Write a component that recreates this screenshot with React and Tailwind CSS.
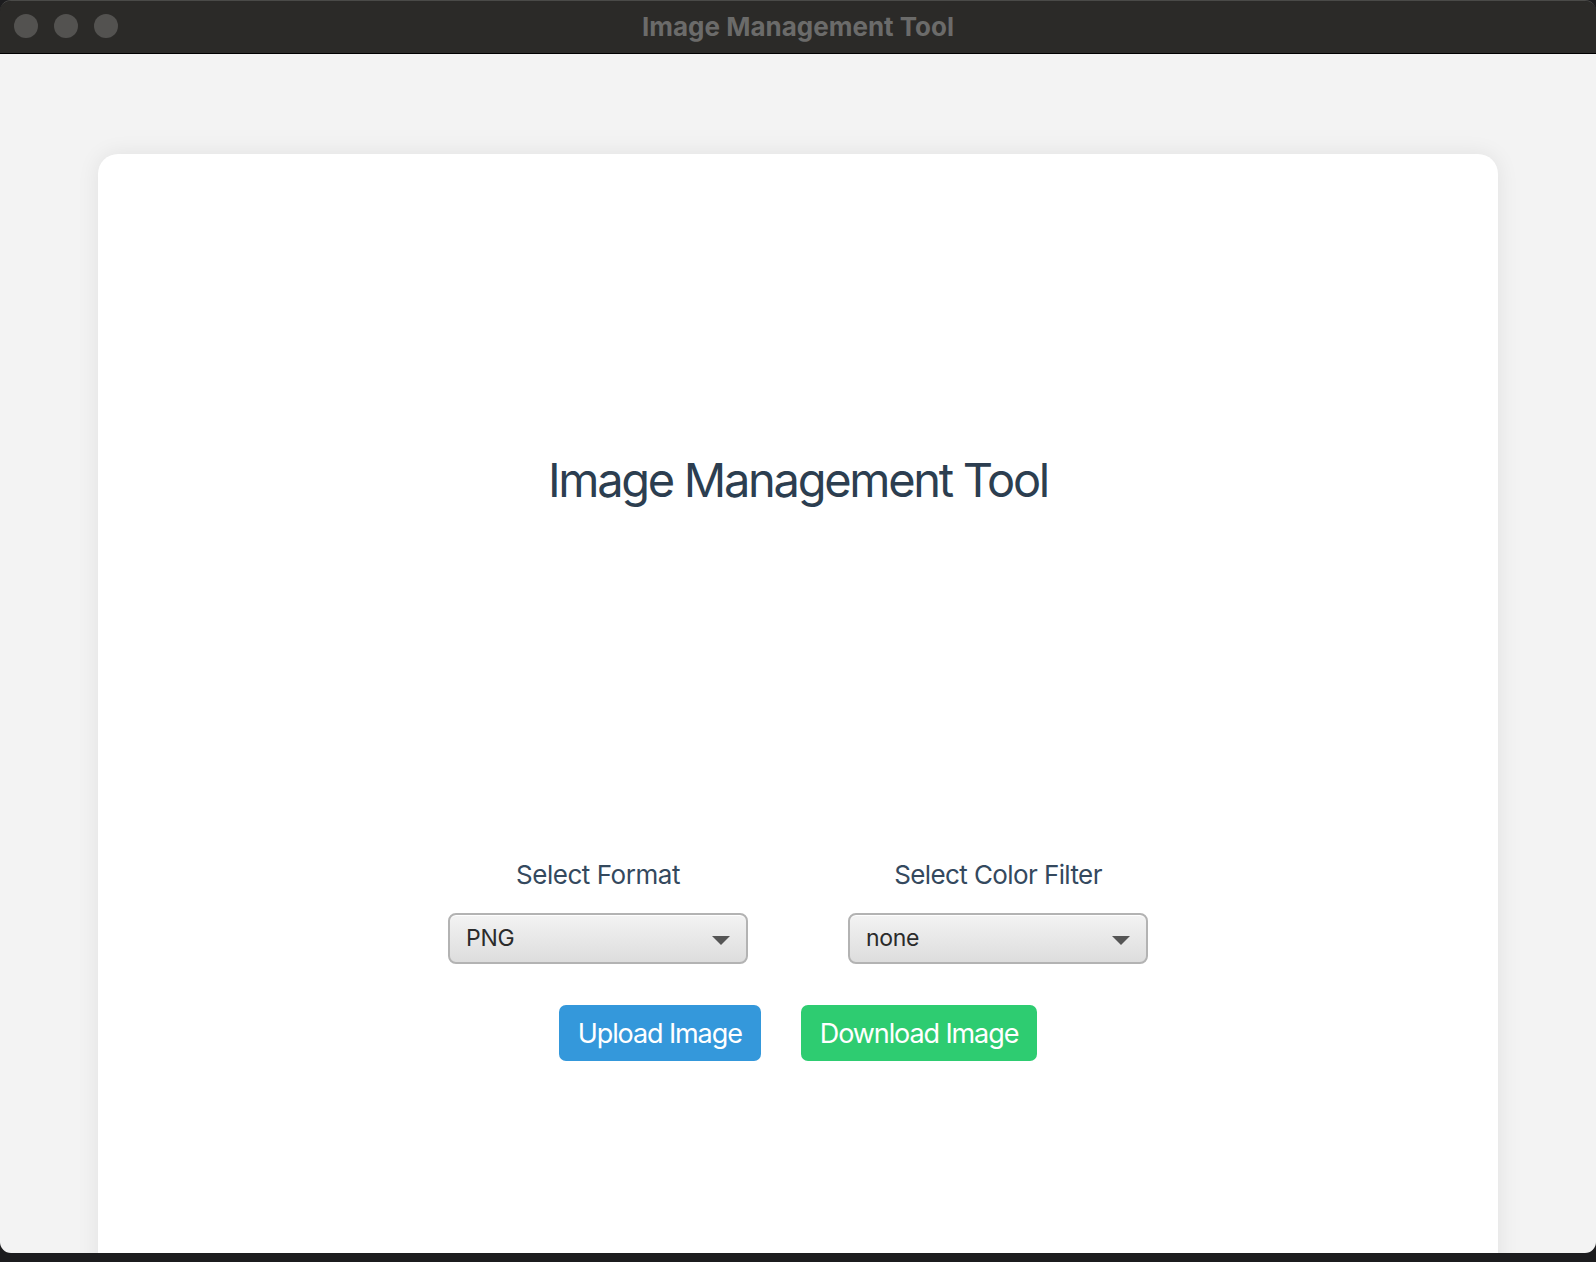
import React from 'react';

const font = { fontFamily: 'Inter, "Noto Sans", sans-serif' };

const Dropdown = ({ value }) => (
  <div className="relative flex h-[51px] w-[300px] items-center rounded-[8px] border-2 border-[#b3b3b3] bg-gradient-to-b from-[#f3f3f3] to-[#dddddd] pl-[16px] shadow-[inset_0_1px_0_rgba(255,255,255,0.9)]">
    <span className="text-[23px] leading-none tracking-[-0.3px] text-[#2b2b2b]">{value}</span>
    <svg className="absolute right-[16px] top-[21px]" width="18" height="9" viewBox="0 0 18 9">
      <path d="M0 0 L18 0 L9 9 Z" fill="#555555" />
    </svg>
  </div>
);

export default function App() {
  return (
    <div className="h-[1262px] w-full overflow-hidden bg-[#1c1c1e]" style={font}>
      <div className="flex h-[1253px] flex-col overflow-hidden rounded-[11px] border-t border-[#4a4a48]">
        {/* title bar */}
        <div className="relative flex h-[53px] shrink-0 items-center justify-center border-b border-black bg-[#2b2a28]">
          <div className="absolute left-[14px] top-[13px] flex gap-[16px]">
            <div className="h-[24px] w-[24px] rounded-full bg-[#535250]" />
            <div className="h-[24px] w-[24px] rounded-full bg-[#535250]" />
            <div className="h-[24px] w-[24px] rounded-full bg-[#535250]" />
          </div>
          <span className="text-[26px] font-bold leading-none text-[#6b6b6a]">Image Management Tool</span>
        </div>

        {/* content */}
        <div className="flex-1 bg-[#f3f3f3] px-[98px] pt-[100px]">
          <div className="flex h-[1200px] flex-col items-center rounded-[20px] bg-white pt-[302px] shadow-[0_0_22px_rgba(0,0,0,0.08)]">
            <h1 className="text-[47px] font-normal leading-none tracking-[-2.3px] text-[#2c3e50]">Image Management Tool</h1>

            <div className="mt-[359px] grid grid-cols-2 gap-x-[100px]">
              <div className="flex flex-col items-center">
                <span className="text-[26px] leading-none tracking-[-0.45px] text-[#34495e]">Select Format</span>
                <div className="mt-[25px]">
                  <Dropdown value="PNG" />
                </div>
              </div>
              <div className="flex flex-col items-center">
                <span className="text-[26px] leading-none tracking-[-0.6px] text-[#34495e]">Select Color Filter</span>
                <div className="mt-[25px]">
                  <Dropdown value="none" />
                </div>
              </div>
            </div>

            <div className="mt-[41px] flex gap-[40px]">
              <button className="h-[56px] rounded-[7px] bg-[#3498db] px-[19px] text-[27px] leading-none tracking-[-1.1px] text-white">
                Upload Image
              </button>
              <button className="h-[56px] rounded-[7px] bg-[#2ecc71] px-[19px] text-[27px] leading-none tracking-[-1.1px] text-white">
                Download Image
              </button>
            </div>
          </div>
        </div>
      </div>
    </div>
  );
}
